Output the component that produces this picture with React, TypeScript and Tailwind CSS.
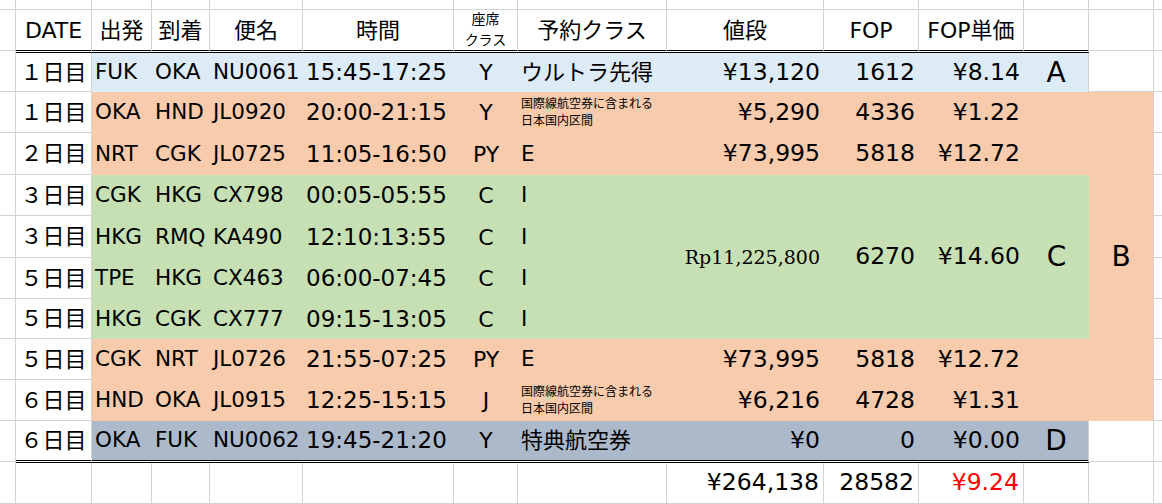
import React from 'react';

const G = 'border-r border-b border-[#d4d4d4]';
const BLUE = 'bg-[#ddebf7]';
const OR = 'bg-[#f8cbad]';
const GR = 'bg-[#c6e0b4]';
const GY = 'bg-[#acb9ca]';
const L = 'justify-start pl-[3px] text-[21.5px]';
const T = 'justify-start pl-[3px] text-[23px]';
const R = 'justify-end pr-[4px]';
const N = 'justify-end pr-[4px] text-[23.5px]';
const M = 'justify-center';
const DBL = 'border-b-[3px] border-double border-b-black bg-clip-padding';

type P = { className?: string; children?: React.ReactNode };

function C({ className = '', children }: P) {
  return <div className={`flex items-center whitespace-nowrap ${className}`}>{children}</div>;
}

function J({ children, className = 'text-[22px]' }: P) {
  return <span className={className}>{children}</span>;
}

function Blank() {
  return <div className={G} />;
}

function Edge() {
  return <div className="border-b border-[#d4d4d4]" />;
}

function Day({ n }: { n: string }) {
  return (
    <C className={`${G} ${M}`}>
      <J>{n}日目</J>
    </C>
  );
}

function Note() {
  return (
    <div className="flex flex-col justify-center pl-[3px] text-[12px] leading-[17px] whitespace-nowrap h-full">
      <span>国際線航空券に含まれる</span>
      <span>日本国内区間</span>
    </div>
  );
}

function Simple({
  bg,
  from,
  to,
  flight,
  time,
  seat,
  cls,
}: {
  bg: string;
  from: string;
  to: string;
  flight: string;
  time: string;
  seat: string;
  cls: React.ReactNode;
}) {
  return (
    <>
      <C className={`${bg} ${L}`}>{from}</C>
      <C className={`${bg} ${L}`}>{to}</C>
      <C className={`${bg} ${L}`}>{flight}</C>
      <C className={`${bg} ${T}`}>{time}</C>
      <C className={`${bg} ${M}`}>{seat}</C>
      {cls}
    </>
  );
}

export default function App() {
  return (
    <div className="w-[1162px] h-[504px] overflow-hidden bg-white text-black font-['DejaVu_Sans','Noto_Sans_CJK_JP',sans-serif] text-[22px]">
      <div className="grid grid-cols-[16px_76px_60px_58px_93px_151px_64px_149px_157px_95px_105px_65px_65px_8px] grid-rows-[10px_43px_39px_41px_42px_41px_42px_41px_40px_41px_41px_42px_41px]">
        {/* row 0 */}
        {Array.from({ length: 13 }).map((_, i) => (
          <Blank key={i} />
        ))}
        <Edge />

        {/* header */}
        <div className="border-r border-[#d4d4d4] pb-[2px]">
          <div className="h-full border-b border-[#d4d4d4]" />
        </div>
        <C className={`border-r border-r-[#d4d4d4] ${DBL} ${M}`}>DATE</C>
        <C className={`border-r border-r-[#d4d4d4] ${DBL} ${M}`}><J>出発</J></C>
        <C className={`border-r border-r-[#d4d4d4] ${DBL} ${M}`}><J>到着</J></C>
        <C className={`border-r border-r-[#d4d4d4] ${DBL} ${M}`}><J>便名</J></C>
        <C className={`border-r border-r-[#d4d4d4] ${DBL} ${M}`}><J>時間</J></C>
        <div className={`border-r border-r-[#d4d4d4] ${DBL} flex flex-col items-center justify-center text-[14px] leading-[21px]`}>
          <span>座席</span>
          <span>クラス</span>
        </div>
        <C className={`border-r border-r-[#d4d4d4] ${DBL} ${M}`}><J>予約クラス</J></C>
        <C className={`border-r border-r-[#d4d4d4] ${DBL} ${M}`}><J>値段</J></C>
        <C className={`border-r border-r-[#d4d4d4] ${DBL} ${M}`}>FOP</C>
        <C className={`border-r border-r-[#d4d4d4] ${DBL} ${M}`}>FOP<J>単価</J></C>
        <div className={`border-r border-r-[#d4d4d4] ${DBL}`} />
        <div className="border-r border-[#d4d4d4] pb-[2px]">
          <div className="h-full border-b border-[#d4d4d4]" />
        </div>
        <div className="pb-[2px]">
          <div className="h-full border-b border-[#d4d4d4]" />
        </div>

        {/* data 1 */}
        <Blank />
        <Day n="１" />
        <Simple bg={BLUE} from="FUK" to="OKA" flight="NU0061" time="15:45-17:25" seat="Y"
          cls={<C className={`${BLUE} ${L}`}><J>ウルトラ先得</J></C>} />
        <C className={`${BLUE} ${N}`}>¥13,120</C>
        <C className={`${BLUE} ${N}`}>1612</C>
        <C className={`${BLUE} ${N}`}>¥8.14</C>
        <C className={`${BLUE} ${M} text-[28px] border-r border-[#d4d4d4]`}>A</C>
        <Blank />
        <Edge />

        {/* data 2 */}
        <Blank />
        <Day n="１" />
        <Simple bg={OR} from="OKA" to="HND" flight="JL0920" time="20:00-21:15" seat="Y"
          cls={<div className={OR}><Note /></div>} />
        <C className={`${OR} ${N}`}>¥5,290</C>
        <C className={`${OR} ${N}`}>4336</C>
        <C className={`${OR} ${N}`}>¥1.22</C>
        <div className={OR} />
        <C className={`${OR} ${M} row-span-8 text-[28px] border-r border-[#d4d4d4]`}>B</C>
        <Edge />

        {/* data 3 */}
        <Blank />
        <Day n="２" />
        <Simple bg={OR} from="NRT" to="CGK" flight="JL0725" time="11:05-16:50" seat="PY"
          cls={<C className={`${OR} ${L}`}>E</C>} />
        <C className={`${OR} ${N}`}>¥73,995</C>
        <C className={`${OR} ${N}`}>5818</C>
        <C className={`${OR} ${N}`}>¥12.72</C>
        <div className={OR} />
        <Edge />

        {/* data 4 */}
        <Blank />
        <Day n="３" />
        <Simple bg={GR} from="CGK" to="HKG" flight="CX798" time="00:05-05:55" seat="C"
          cls={<C className={`${GR} ${L}`}>I</C>} />
        <C className={`${GR} ${R} row-span-4 font-['DejaVu_Serif',serif] text-[19px]`}>Rp11,225,800</C>
        <C className={`${GR} ${N} row-span-4`}>6270</C>
        <C className={`${GR} ${N} row-span-4`}>¥14.60</C>
        <C className={`${GR} ${M} row-span-4 text-[28px]`}>C</C>
        <Edge />

        {/* data 5 */}
        <Blank />
        <Day n="３" />
        <Simple bg={GR} from="HKG" to="RMQ" flight="KA490" time="12:10:13:55" seat="C"
          cls={<C className={`${GR} ${L}`}>I</C>} />
        <Edge />

        {/* data 6 */}
        <Blank />
        <Day n="５" />
        <Simple bg={GR} from="TPE" to="HKG" flight="CX463" time="06:00-07:45" seat="C"
          cls={<C className={`${GR} ${L}`}>I</C>} />
        <Edge />

        {/* data 7 */}
        <Blank />
        <Day n="５" />
        <Simple bg={GR} from="HKG" to="CGK" flight="CX777" time="09:15-13:05" seat="C"
          cls={<C className={`${GR} ${L}`}>I</C>} />
        <Edge />

        {/* data 8 */}
        <Blank />
        <Day n="５" />
        <Simple bg={OR} from="CGK" to="NRT" flight="JL0726" time="21:55-07:25" seat="PY"
          cls={<C className={`${OR} ${L}`}>E</C>} />
        <C className={`${OR} ${N}`}>¥73,995</C>
        <C className={`${OR} ${N}`}>5818</C>
        <C className={`${OR} ${N}`}>¥12.72</C>
        <div className={OR} />
        <Edge />

        {/* data 9 */}
        <Blank />
        <Day n="６" />
        <Simple bg={OR} from="HND" to="OKA" flight="JL0915" time="12:25-15:15" seat="J"
          cls={<div className={OR}><Note /></div>} />
        <C className={`${OR} ${N}`}>¥6,216</C>
        <C className={`${OR} ${N}`}>4728</C>
        <C className={`${OR} ${N}`}>¥1.31</C>
        <div className={OR} />
        <Edge />

        {/* data 10 */}
        <div className="border-r border-[#d4d4d4] pb-[1px]">
          <div className="h-full border-b border-[#d4d4d4]" />
        </div>
        <C className={`border-r border-r-[#d4d4d4] ${DBL} ${M}`}><J>６日目</J></C>
        <C className={`${GY} ${DBL} ${L}`}>OKA</C>
        <C className={`${GY} ${DBL} ${L}`}>FUK</C>
        <C className={`${GY} ${DBL} ${L}`}>NU0062</C>
        <C className={`${GY} ${DBL} ${T}`}>19:45-21:20</C>
        <C className={`${GY} ${DBL} ${M}`}>Y</C>
        <C className={`${GY} ${DBL} ${L}`}><J>特典航空券</J></C>
        <C className={`${GY} ${DBL} ${N}`}>¥0</C>
        <C className={`${GY} ${DBL} ${N}`}>0</C>
        <C className={`${GY} ${DBL} ${N}`}>¥0.00</C>
        <C className={`${GY} ${DBL} ${M} text-[28px] border-r border-r-[#d4d4d4]`}>D</C>
        <div className="border-r border-[#d4d4d4] pb-[1px]">
          <div className="h-full border-b border-[#d4d4d4]" />
        </div>
        <div className="pb-[1px]">
          <div className="h-full border-b border-[#d4d4d4]" />
        </div>

        {/* totals */}
        <Blank />
        <Blank />
        <Blank />
        <Blank />
        <Blank />
        <Blank />
        <Blank />
        <Blank />
        <C className={`${G} ${N}`}>¥264,138</C>
        <C className={`${G} ${N}`}>28582</C>
        <C className={`${G} ${N} text-[#ff0000]`}>¥9.24</C>
        <Blank />
        <Blank />
        <Edge />
      </div>
    </div>
  );
}
